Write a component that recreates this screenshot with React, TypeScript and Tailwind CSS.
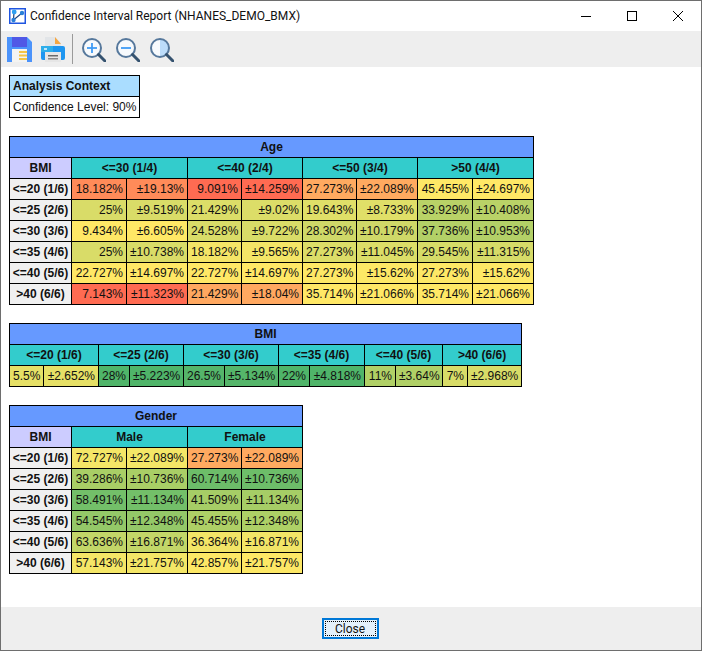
import React from 'react'

type Cell = [string, string]

const RED = '#ff6b52'

const bmiLabels = [
  '<=20 (1/6)',
  '<=25 (2/6)',
  '<=30 (3/6)',
  '<=35 (4/6)',
  '<=40 (5/6)',
  '>40 (6/6)',
]

const ageRows: Cell[][] = [
  [['18.182%', '#ff8b59'], ['±19.13%', '#ff8b59'], ['9.091%', RED], ['±14.259%', RED], ['27.273%', '#ffaa60'], ['±22.089%', '#ffaa60'], ['45.455%', '#ffe866'], ['±24.697%', '#ffe866']],
  [['25%', '#d9dc68'], ['±9.519%', '#d9dc68'], ['21.429%', '#dcdd68'], ['±9.02%', '#dcdd68'], ['19.643%', '#e0df68'], ['±8.733%', '#e0df68'], ['33.929%', '#b9d267'], ['±10.408%', '#b9d267']],
  [['9.434%', '#ffe866'], ['±6.605%', '#ffe866'], ['24.528%', '#d9dc68'], ['±9.722%', '#d9dc68'], ['28.302%', '#cfd868'], ['±10.179%', '#cfd868'], ['37.736%', '#b3d067'], ['±10.953%', '#b3d067']],
  [['25%', '#d9dc68'], ['±10.738%', '#d9dc68'], ['18.182%', '#f4e567'], ['±9.565%', '#f4e567'], ['27.273%', '#dcdd68'], ['±11.045%', '#dcdd68'], ['29.545%', '#d6db68'], ['±11.315%', '#d6db68']],
  [['22.727%', '#ffe866'], ['±14.697%', '#ffe866'], ['22.727%', '#ffe866'], ['±14.697%', '#ffe866'], ['27.273%', '#fde866'], ['±15.62%', '#fde866'], ['27.273%', '#fde866'], ['±15.62%', '#fde866']],
  [['7.143%', RED], ['±11.323%', RED], ['21.429%', '#ffa860'], ['±18.04%', '#ffa860'], ['35.714%', '#ffe866'], ['±21.066%', '#ffe866'], ['35.714%', '#ffe866'], ['±21.066%', '#ffe866']],
]

const bmiRow: Cell[] = [
  ['5.5%', '#e6e066'], ['±2.652%', '#e6e066'], ['28%', '#4fb469'], ['±5.223%', '#4fb469'], ['26.5%', '#55b56a'], ['±5.134%', '#55b56a'],
  ['22%', '#4fb469'], ['±4.818%', '#4fb469'], ['11%', '#b0d066'], ['±3.64%', '#b0d066'], ['7%', '#d8dc68'], ['±2.968%', '#d8dc68'],
]

const genderRows: Cell[][] = [
  [['72.727%', '#f4e667'], ['±22.089%', '#f4e667'], ['27.273%', '#ffaa60'], ['±22.089%', '#ffaa60']],
  [['39.286%', '#a9ce66'], ['±10.736%', '#a9ce66'], ['60.714%', '#6dbd69'], ['±10.736%', '#6dbd69']],
  [['58.491%', '#73bf69'], ['±11.134%', '#73bf69'], ['41.509%', '#a6cd66'], ['±11.134%', '#a6cd66']],
  [['54.545%', '#94c868'], ['±12.348%', '#94c868'], ['45.455%', '#aed066'], ['±12.348%', '#aed066']],
  [['63.636%', '#c3d668'], ['±16.871%', '#c3d668'], ['36.364%', '#f2e567'], ['±16.871%', '#f2e567']],
  [['57.143%', '#f4e667'], ['±21.757%', '#f4e667'], ['42.857%', '#fde866'], ['±21.757%', '#fde866']],
]

const cellClass = 'border border-black px-[3px] text-right whitespace-nowrap overflow-hidden'
const headClass = 'border border-black font-bold text-center whitespace-nowrap'

const Cols = ({ widths }: { widths: number[] }) => (
  <colgroup>
    {widths.map((w, i) => (
      <col key={i} style={{ width: w }} />
    ))}
  </colgroup>
)

interface PivotProps {
  title: string
  widths: number[]
  groups: string[]
  rowLabels?: string[]
  rows: Cell[][]
  width: number
}

const PivotTable = ({ title, widths, groups, rowLabels, rows, width }: PivotProps) => (
  <table className="table-fixed border-collapse" style={{ width }}>
    <Cols widths={widths} />
    <tbody>
      <tr className="h-[21px]">
        <td colSpan={widths.length} className={`${headClass} bg-[#6699ff]`}>
          {title}
        </td>
      </tr>
      <tr className="h-[21px]">
        {rowLabels && <td className={`${headClass} bg-[#ccccff]`}>BMI</td>}
        {groups.map((g) => (
          <td key={g} colSpan={2} className={`${headClass} bg-[#33cccc]`}>
            {g}
          </td>
        ))}
      </tr>
      {rows.map((row, i) => (
        <tr key={i} className="h-[21px]">
          {rowLabels && <td className={`${headClass} bg-[#f0f0f0]`}>{rowLabels[i]}</td>}
          {row.map(([text, bg], j) => (
            <td key={j} className={cellClass} style={{ backgroundColor: bg }}>
              {text}
            </td>
          ))}
        </tr>
      ))}
    </tbody>
  </table>
)

const AppIcon = () => (
  <svg width="17" height="16" viewBox="0 0 17 16" className="shrink-0">
    <rect x="0.75" y="0.75" width="15.5" height="14.5" fill="#fff" stroke="#1f55e0" strokeWidth="1.5" />
    <path d="M5 4 L4.5 12 L13 5" stroke="#1d3f7a" strokeWidth="1.2" fill="none" />
    <circle cx="5.2" cy="4" r="2.4" fill="#2f9ff0" />
    <circle cx="13" cy="5" r="2.2" fill="#2a7fd8" />
    <circle cx="4.5" cy="12" r="2.2" fill="#2a7fd8" />
  </svg>
)

const SaveIcon = () => (
  <svg width="25" height="25" viewBox="0 0 25 25">
    <path d="M0 0 H20 L25 5 V25 H0 Z" fill="#4b93fb" />
    <rect x="5" y="0" width="15" height="10" fill="#5058e6" />
    <rect x="5" y="12" width="15" height="13" fill="#f4f4f2" />
    <rect x="12" y="14" width="8" height="2" fill="#f6c445" />
    <rect x="12" y="17.5" width="8" height="2" fill="#f6c445" />
    <rect x="12" y="21" width="8" height="2" fill="#f6c445" />
  </svg>
)

const PrintIcon = () => (
  <svg width="25" height="25" viewBox="0 0 25 25">
    <path d="M4 0 H14 L20 6 V9 H4 Z" fill="#e2e5e8" />
    <path d="M14 0 L20 7 H14 Z" fill="#f5a742" />
    <path d="M2 9 H22 Q24 9 24 11 V21 Q24 23 22 23 H2 Q0 23 0 21 V11 Q0 9 2 9 Z" fill="#1e96f0" />
    <rect x="0" y="9" width="12" height="6" fill="#2eaeea" />
    <rect x="3" y="11" width="3" height="2" fill="#bfe6fa" />
    <rect x="4" y="15" width="16" height="10" fill="#e6e6e6" />
    <rect x="7" y="18" width="10" height="1.5" fill="#6b6b6b" />
    <rect x="7" y="21" width="10" height="1.5" fill="#8a8a8a" />
  </svg>
)

const Magnifier = ({ mode }: { mode: 'in' | 'out' | 'fit' }) => (
  <svg width="25" height="25" viewBox="0 0 25 25">
    <circle cx="11" cy="11" r="9" fill="#f7fafd" />
    {mode === 'fit' && <path d="M11 2 A9 9 0 0 1 11 20 Z" fill="#bcdcfa" />}
    <circle cx="11" cy="11" r="9" fill="none" stroke="#56789c" strokeWidth="2" />
    <path d="M17.5 17.5 L24 24" stroke="#35526f" strokeWidth="3" strokeLinecap="round" />
    {mode !== 'fit' && <path d="M6 11 H16" stroke="#3f9bf5" strokeWidth="1.8" />}
    {mode === 'in' && <path d="M11 6 V16" stroke="#3f9bf5" strokeWidth="1.8" />}
  </svg>
)

const TitleBar = () => (
  <div className="flex h-[30px] shrink-0 items-center bg-white">
    <div className="ml-2 flex items-center gap-1">
      <AppIcon />
      <span className="font-['Roboto',sans-serif] text-xs text-[#111]">
        Confidence Interval Report (NHANES_DEMO_BMX)
      </span>
    </div>
    <div className="ml-auto flex">
      <button className="flex h-[30px] w-[46px] items-center justify-center">
        <svg width="10" height="10" viewBox="0 0 10 10">
          <path d="M0 5.5 H10" stroke="#000" strokeWidth="1" />
        </svg>
      </button>
      <button className="flex h-[30px] w-[46px] items-center justify-center">
        <svg width="10" height="10" viewBox="0 0 10 10">
          <rect x="0.5" y="0.5" width="9" height="9" fill="none" stroke="#000" />
        </svg>
      </button>
      <button className="flex h-[30px] w-[46px] items-center justify-center">
        <svg width="10" height="10" viewBox="0 0 10 10">
          <path d="M0 0 L10 10 M10 0 L0 10" stroke="#000" strokeWidth="1" />
        </svg>
      </button>
    </div>
  </div>
)

const Toolbar = () => (
  <div className="flex h-9 shrink-0 items-center bg-[#eeeeee] pl-[6px]">
    <SaveIcon />
    <div className="ml-[9px]">
      <PrintIcon />
    </div>
    <div className="ml-[6px] h-[30px] w-px bg-[#9a9a9a]" />
    <div className="ml-2 flex gap-[9px]">
      <Magnifier mode="in" />
      <Magnifier mode="out" />
      <Magnifier mode="fit" />
    </div>
  </div>
)

const App = () => (
  <div className="flex h-[651px] w-[702px] flex-col overflow-hidden border border-[#6e6e6e] bg-white font-['Liberation_Sans',Arial,sans-serif] text-xs text-[#111]">
    <TitleBar />
    <Toolbar />
    <main className="flex min-h-0 flex-1 flex-col items-start gap-[18px] px-2 pt-2">
      <table className="w-[131px] table-fixed border-collapse">
        <tbody>
          <tr className="h-[21px]">
            <td className="border border-black bg-[#aaddff] px-[3px] font-bold">Analysis Context</td>
          </tr>
          <tr className="h-[21px]">
            <td className="border border-black px-[3px] whitespace-nowrap">Confidence Level: 90%</td>
          </tr>
        </tbody>
      </table>

      <PivotTable
        title="Age"
        width={524}
        widths={[62, 55, 61, 54, 61, 54, 61, 55, 61]}
        groups={['<=30 (1/4)', '<=40 (2/4)', '<=50 (3/4)', '>50 (4/4)']}
        rowLabels={bmiLabels}
        rows={ageRows}
      />

      <PivotTable
        title="BMI"
        width={512}
        widths={[34, 55, 31, 54, 41, 54, 31, 55, 31, 47, 25, 54]}
        groups={bmiLabels}
        rows={[bmiRow]}
      />

      <PivotTable
        title="Gender"
        width={293}
        widths={[62, 55, 61, 54, 61]}
        groups={['Male', 'Female']}
        rowLabels={bmiLabels}
        rows={genderRows}
      />
    </main>
    <footer className="flex h-[43px] shrink-0 items-center justify-center bg-[#eeeeee] pr-[2px]">
      <button className="h-[21px] w-[57px] border-2 border-[#0078d7] bg-[#e5f1fb] p-px font-['Roboto',sans-serif] text-xs text-[#111]">
        <span className="flex h-full w-full items-center justify-center border border-dotted border-black">Close</span>
      </button>
    </footer>
  </div>
)

export default App
